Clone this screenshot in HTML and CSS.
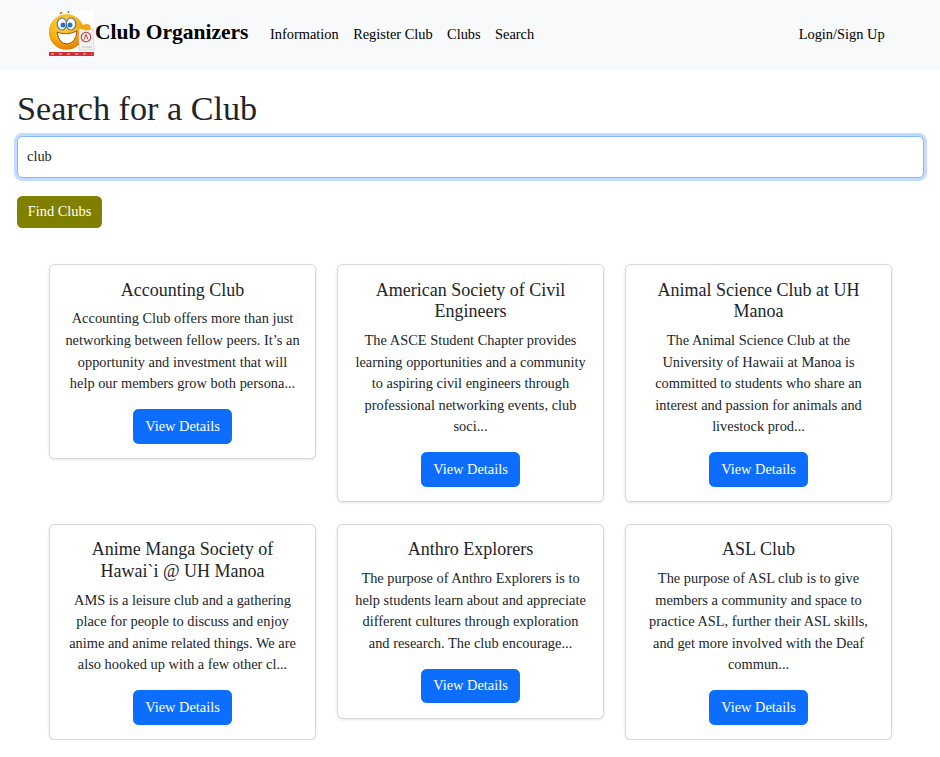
FILE: index.html
```html
<!DOCTYPE html>
<html lang="en">
<head>
<meta charset="utf-8">
<title>Club Organizers</title>
<link rel="stylesheet" href="styles.css">
</head>
<body>
<nav class="navbar">
  <div class="brand">
    <svg class="logo" width="45" height="45" viewBox="0 0 45 45" aria-hidden="true">
      <defs>
        <radialGradient id="face" cx="42%" cy="30%" r="72%">
          <stop offset="0" stop-color="#fdd94a"/>
          <stop offset=".6" stop-color="#f8b010"/>
          <stop offset="1" stop-color="#e07c05"/>
        </radialGradient>
      </defs>
      <rect width="45" height="45" fill="#fff"/>
      <g class="logo-art">
        <path d="M11 3 L13 1 M19 2 L20 0" stroke="#b5720c" stroke-width="1.500" fill="none"/>
        <circle cx="17.500" cy="21" r="17.800" fill="url(#face)"/>
        <ellipse cx="13" cy="13" rx="4.800" ry="6" fill="#fff" stroke="#5b7a9a" stroke-width="1.200"/>
        <ellipse cx="22" cy="13" rx="4.800" ry="6" fill="#fff" stroke="#5b7a9a" stroke-width="1.200"/>
        <circle cx="14" cy="14" r="2.500" fill="#2f72b8"/>
        <circle cx="21" cy="14" r="2.500" fill="#2f72b8"/>
        <path d="M8 21 Q17 25 28 20 Q27 32 18 33 Q10 33 8 21Z" fill="#fff" stroke="#9a5508"/>
        <rect x="30" y="18" width="15" height="21" fill="#f4f2f0" stroke="#bdbdbd" stroke-width=".6"/>
        <circle cx="37" cy="26" r="4.800" fill="none" stroke="#c8343c" stroke-width="1.100"/>
        <path d="M35 28.500 L37 23.500 L39 28.500" fill="none" stroke="#c8343c"/>
        <path d="M33 36 H43" stroke="#c4c4c4"/>
        <path d="M33 18 L34 14 Q38 12 41 14 L42 18 Q38 21 33 18Z" fill="#f3a915"/>
        <rect y="41" width="45" height="4" fill="#cf3038"/>
        <path d="M2 43H43" stroke="#f2c7c9" stroke-dasharray="3 5"/>
      </g>
    </svg>
    <span class="brand-name">Club Organizers</span>
  </div>
  <ul class="nav-links">
    <li>Information</li>
    <li>Register Club</li>
    <li>Clubs</li>
    <li>Search</li>
  </ul>
  <div class="login">Login/Sign Up</div>
</nav>
<main class="content">
  <h1 class="title">Search for a Club</h1>
  <input class="search" type="text" value="club">
  <button class="find" type="button">Find Clubs</button>
  <section class="grid">
    <article class="card">
      <h5>Accounting Club</h5>
      <p>Accounting Club offers more than just networking between fellow peers. It’s an opportunity and investment that will help our members grow both persona...</p>
      <a class="details">View Details</a>
    </article>
    <article class="card">
      <h5>American Society of Civil Engineers</h5>
      <p>The ASCE Student Chapter provides learning opportunities and a community to aspiring civil engineers through professional networking events, club soci...</p>
      <a class="details">View Details</a>
    </article>
    <article class="card">
      <h5>Animal Science Club at UH Manoa</h5>
      <p>The Animal Science Club at the University of Hawaii at Manoa is committed to students who share an interest and passion for animals and livestock prod...</p>
      <a class="details">View Details</a>
    </article>
    <article class="card">
      <h5>Anime Manga Society of Hawai`i @ UH Manoa</h5>
      <p>AMS is a leisure club and a gathering place for people to discuss and enjoy anime and anime related things. We are also hooked up with a few other cl...</p>
      <a class="details">View Details</a>
    </article>
    <article class="card">
      <h5>Anthro Explorers</h5>
      <p>The purpose of Anthro Explorers is to help students learn about and appreciate different cultures through exploration and research. The club encourage...</p>
      <a class="details">View Details</a>
    </article>
    <article class="card">
      <h5>ASL Club</h5>
      <p>The purpose of ASL club is to give members a community and space to practice ASL, further their ASL skills, and get more involved with the Deaf commun...</p>
      <a class="details">View Details</a>
    </article>
  </section>
</main>
</body>
</html>
```

FILE: styles.css
```css
* { box-sizing: border-box; }
html, body { margin: 0; padding: 0; }
body {
  font-family: "Liberation Serif", "Times New Roman", serif;
  font-size: 14.400px;
  line-height: 1.5;
  color: #212529;
  background: #fff;
}
.navbar {
  display: flex;
  align-items: center;
  height: 70px;
  padding: 0 55.400px 0 48px;
  background: #f8f9fa;
  color: #000;
}
.brand { display: flex; align-items: center; margin-left: 1px; margin-right: 21.500px; }
.logo { display: block; flex: none; margin-top: -3px; }
.logo-art { filter: blur(.3px); }
.brand-name { font-size: 21.500px; font-weight: 700; line-height: 1.2; margin-top: -4px; margin-left: 1px; }
.nav-links { display: flex; gap: 14.400px; list-style: none; margin: -1px 0 0; padding: 0; }
.login { margin: -1px 0 0 auto; }
.content { padding: 0 16px 0 17px; }
.title { margin: 18.200px 0 6.600px; font-size: 34.200px; font-weight: 400; line-height: 1.2; }
.search {
  display: block;
  width: 100%;
  height: 42px;
  padding: 0 9px;
  border: 1px solid #86b7fe;
  border-radius: 5.400px;
  outline: 0;
  box-shadow: 0 0 0 3px rgba(13, 110, 253, .25);
  font: inherit;
  color: #212529;
  background: #fff;
}
.find {
  display: block;
  margin-top: 18px;
  width: 85px;
  height: 32px;
  padding: 0;
  border: 0;
  border-radius: 5.400px;
  background: #808000;
  color: #fff;
  font: inherit;
}
.grid {
  display: grid;
  grid-template-columns: repeat(3, 267px);
  column-gap: 21px;
  row-gap: 21.800px;
  align-items: start;
  margin: 36.400px 0 0 32px;
}
.card {
  display: flex;
  flex-direction: column;
  align-items: center;
  padding: 14.400px;
  border: 1px solid #d6d6d6;
  border-radius: 5.400px;
  box-shadow: 0 1px 3px rgba(0, 0, 0, .1);
  text-align: center;
  background: #fff;
}
.card h5 { margin: 0 0 7.200px; font-size: 18px; font-weight: 400; line-height: 21.600px; }
.card p { margin: 0 0 14.400px; line-height: 21.600px; }
.details {
  display: block;
  padding: 5.400px 10.800px;
  border: 1px solid #0d6efd;
  border-radius: 5.400px;
  background: #0d6efd;
  color: #fff;
}
```
